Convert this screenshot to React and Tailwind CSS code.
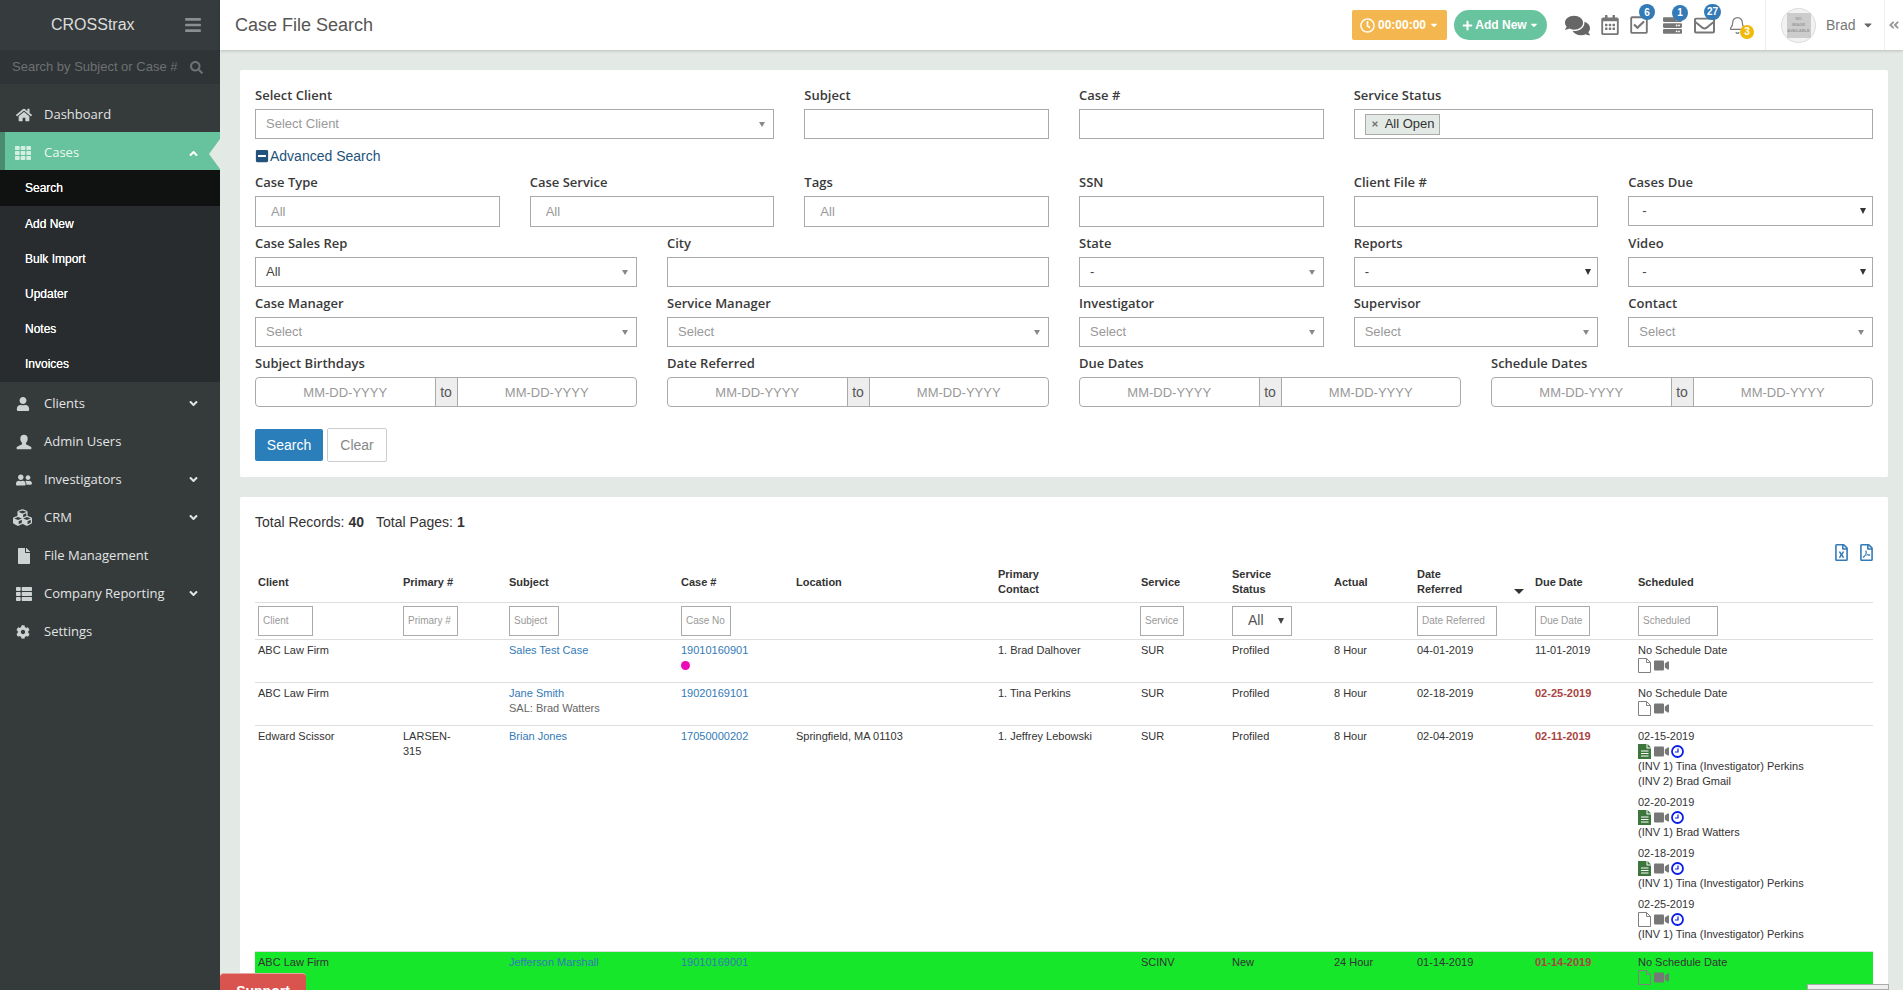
import {
  FaHome, FaTh, FaUser, FaUserFriends, FaCubes, FaFile, FaThList, FaCog, FaAngleDown, FaAngleUp,
  FaSearch, FaBars, FaRegClock, FaPlus, FaCaretDown, FaComments, FaRegCalendarAlt, FaRegCheckSquare,
  FaServer, FaRegEnvelope, FaAngleDoubleLeft, FaMinusSquare, FaVideo,
  FaRegFileExcel, FaRegFilePdf, FaTimes,
} from "react-icons/fa";
import { Bell } from "lucide-react";

function AdminIcon({ size, className }) {
  return (
    <svg width={size} height={size} viewBox="0 0 24 24" fill="currentColor" className={className}>
      <path d="M12 1a5.5 5.5 0 0 0-5.5 6c0 2.500 1 4.800 2.500 6v2.500L1 19.500V23h22v-3.500l-8-4V13c1.500-1.200 2.500-3.500 2.500-6A5.500 5.500 0 0 0 12 1z" />
    </svg>
  );
}

const menuTop = [{ label: "Dashboard", icon: FaHome, size: 16, pad: "pt-[3px]" }];
const menuBottom = [
  { label: "Clients", icon: FaUser, size: 14, more: true },
  { label: "Admin Users", icon: AdminIcon, size: 16 },
  { label: "Investigators", icon: FaUserFriends, size: 16, more: true },
  { label: "CRM", icon: FaCubes, size: 19, offset: "-ml-[3px]", more: true },
  { label: "File Management", icon: FaFile, size: 16 },
  { label: "Company Reporting", icon: FaThList, size: 16, more: true },
  { label: "Settings", icon: FaCog, size: 14 },
];
const subMenu = ["Add New", "Bulk Import", "Updater", "Notes", "Invoices"];

function MenuItem({ item }) {
  const Icon = item.icon;
  return (
    <div className={`flex h-[38px] items-center pl-[16px] pr-[20px] font-['Open_Sans',sans-serif] text-[13px] text-[#e2e4e4] ${item.pad || "pt-[5px]"}`}>
      <span className="flex w-[28px] shrink-0">
        <Icon size={item.size} className={`text-[#cfd2d2] ${item.offset || ""}`} />
      </span>
      <span>{item.label}</span>
      {item.more && <FaAngleDown size={13} className="ml-auto text-[#e2e4e4]" />}
    </div>
  );
}

function Sidebar() {
  return (
    <aside className="w-[220px] shrink-0 bg-[#353a3b]">
      <div className="flex h-[50px] items-center bg-[#363b3d] pl-[51px] pr-[18px] text-[16px] text-[#dddddd]">
        <span>CROSStrax</span>
        <FaBars size={18} className="ml-auto text-[#8c8f90]" />
      </div>
      <div className="flex h-[34px] items-center bg-[#2f3436] pl-[12px] pr-[17px] text-[13px] text-[#6d7172]">
        <span>Search by Subject or Case #</span>
        <FaSearch size={13} className="ml-auto" />
      </div>
      <nav className="mt-[10px]">
        {menuTop.map((item) => (
          <MenuItem key={item.label} item={item} />
        ))}
        <div className="relative flex h-[38px] items-center border-l-[5px] border-[#4a8a70] bg-[#67c39d] pl-[10px] pr-[20px] pt-[4px] font-['Open_Sans',sans-serif] text-[13px] text-[#eef8f3]">
          <span className="flex w-[29px] shrink-0">
            <FaTh size={16} className="text-[#d5eee3]" />
          </span>
          <span>Cases</span>
          <FaAngleUp size={13} className="ml-auto text-white" />
          <span className="absolute right-0 top-[7px] h-0 w-0 border-y-[15px] border-r-[11px] border-y-transparent border-r-[#e3e9e5]" />
        </div>
        <div className="bg-[#282c2e] pb-px text-[12px] text-white [text-shadow:0_0_0.6px_#ffffff]">
          <div className="flex h-[36px] items-center bg-[#101212] pl-[25px]">Search</div>
          {subMenu.map((label) => (
            <div key={label} className="flex h-[35px] items-center pl-[25px]">
              {label}
            </div>
          ))}
        </div>
        {menuBottom.map((item) => (
          <MenuItem key={item.label} item={item} />
        ))}
      </nav>
    </aside>
  );
}

function IconBadge({ value, className, children }) {
  return (
    <span className={`relative flex shrink-0 text-[#777777] ${className}`}>
      {children}
      <span className="absolute -top-[11px] -right-[6px] flex h-[16px] min-w-[16px] items-center justify-center rounded-full bg-[#337ab7] px-[3px] text-[10px] font-bold text-white">
        {value}
      </span>
    </span>
  );
}

function Header() {
  return (
    <header className="flex h-[50px] shrink-0 items-center bg-white pl-[15px] shadow-[0_1px_3px_rgba(0,0,0,0.18)]">
      <h1 className="text-[18px] text-[#555555]">Case File Search</h1>
      <div className="ml-auto flex h-full items-center">
        <button className="flex h-[30px] w-[95px] items-center justify-center gap-[3px] rounded-[2px] bg-[#f4b74f] text-[12px] font-bold text-white">
          <FaRegClock size={15} />
          00:00:00
          <FaCaretDown size={10} />
        </button>
        <button className="ml-[7px] flex h-[30px] w-[93px] items-center justify-center gap-[2px] rounded-full bg-[#68c49f] text-[12px] font-bold text-white">
          <FaPlus size={11} />
          Add New
          <FaCaretDown size={10} />
        </button>
        <FaComments size={25} className="ml-[18px] shrink-0 text-[#666666]" />
        <FaRegCalendarAlt size={20} className="ml-[10px] shrink-0 text-[#777777]" />
        <IconBadge value="6" className="ml-[9px]">
          <FaRegCheckSquare size={20} />
        </IconBadge>
        <IconBadge value="1" className="ml-[14px]">
          <FaServer size={19} />
        </IconBadge>
        <IconBadge value="27" className="ml-[12px]">
          <FaRegEnvelope size={21} />
        </IconBadge>
        <span className="relative ml-[13px] flex shrink-0 text-[#777777]">
          <Bell size={19} strokeWidth={1.5} />
          <span className="absolute -right-[7px] top-[9px] flex h-[14px] w-[14px] items-center justify-center rounded-full bg-[#f0b90b] text-[10px] font-bold text-white">
            3
          </span>
        </span>
        <div className="ml-[18px] flex h-full w-[120px] shrink-0 items-center border-x border-[#eeeeee] pl-[15px]">
          <span className="flex h-[35px] w-[35px] items-center justify-center rounded-full border border-[#dddddd] bg-[#f2f2f2]">
            <span className="flex h-[25px] w-[24px] flex-col items-center justify-center bg-[#cccccc] text-[4px] font-bold leading-[6px] text-[#999999]">
              <span>NO</span>
              <span>IMAGE</span>
              <span>AVAILABLE</span>
            </span>
          </span>
          <span className="ml-[10px] text-[14px] text-[#777777]">Brad</span>
          <FaCaretDown size={12} className="ml-[6px] text-[#666666]" />
        </div>
        <div className="flex w-[18px] justify-center">
          <FaAngleDoubleLeft size={12} className="text-[#999999]" />
        </div>
      </div>
    </header>
  );
}

function Label({ children }) {
  return (
    <label className="mb-[5px] block h-[18px] font-['Open_Sans',sans-serif] text-[13px] font-semibold leading-[18px] text-[#3a3a3a]">
      {children}
    </label>
  );
}

function TextField({ label, span, placeholder, tall }) {
  return (
    <div className={span}>
      <Label>{label}</Label>
      <input
        placeholder={placeholder}
        className={`w-full border border-[#aaaaaa] pl-[15px] text-[13px] outline-none placeholder:text-[#999999] ${tall ? "h-[31px]" : "h-[30px]"}`}
      />
    </div>
  );
}

function SelectField({ label, span, value, muted, dark, wide }) {
  return (
    <div className={span}>
      <Label>{label}</Label>
      <div className={`flex h-[30px] items-center justify-between border border-[#aaaaaa] text-[13px] ${wide ? "pl-[13px]" : "pl-[10px]"} ${dark ? "pr-[6px]" : "pr-[8px]"}`}>
        <span className={muted ? "text-[#999999]" : "text-[#444444]"}>{value}</span>
        {dark ? (
          <span className="h-0 w-0 border-x-[3px] border-t-[6px] border-x-transparent border-t-[#333333]" />
        ) : (
          <span className="h-0 w-0 border-x-[3px] border-t-[5px] border-x-transparent border-t-[#888888]" />
        )}
      </div>
    </div>
  );
}

function DateRange({ label }) {
  return (
    <div className="col-span-3">
      <Label>{label}</Label>
      <div className="flex h-[30px] overflow-hidden rounded-[4px] border border-[#aaaaaa] text-[13px]">
        <input
          placeholder="MM-DD-YYYY"
          className="w-0 grow pt-px text-center outline-none placeholder:text-[#999999]"
        />
        <span className="flex w-[23px] shrink-0 items-center justify-center border-x border-[#aaaaaa] bg-[#eeeeee] pt-px text-[14px] text-[#555555]">
          to
        </span>
        <input
          placeholder="MM-DD-YYYY"
          className="w-0 grow pt-px text-center outline-none placeholder:text-[#999999]"
        />
      </div>
    </div>
  );
}

function SearchCard() {
  return (
    <section className="rounded-[2px] bg-white px-[15px] pb-[15px] pt-[16px]">
      <div className="grid grid-cols-12 gap-x-[30px]">
        <SelectField label="Select Client" span="col-span-4" value="Select Client" muted />
        <TextField label="Subject" span="col-span-2" />
        <TextField label="Case #" span="col-span-2" />
        <div className="col-span-4">
          <Label>Service Status</Label>
          <div className="flex h-[30px] items-center border border-[#aaaaaa] pl-[10px]">
            <span className="flex h-[21px] w-[75px] items-center gap-[6px] border border-[#aaaaaa] bg-[#e3e9e5] pl-[5px] text-[13px] text-[#333333]">
              <FaTimes size={8} className="text-[#777777]" />
              All Open
            </span>
          </div>
        </div>
      </div>
      <div className="mt-[8px] flex h-[18px] items-center gap-[1px] text-[14px] text-[#23527c]">
        <FaMinusSquare size={14} />
        Advanced Search
      </div>
      <div className="mt-[8px] grid grid-cols-12 gap-x-[30px] gap-y-[7px]">
        <TextField label="Case Type" span="col-span-2" placeholder="All" tall />
        <TextField label="Case Service" span="col-span-2" placeholder="All" tall />
        <TextField label="Tags" span="col-span-2" placeholder="All" tall />
        <TextField label="SSN" span="col-span-2" tall />
        <TextField label="Client File #" span="col-span-2" tall />
        <SelectField label="Cases Due" span="col-span-2" value="-" dark wide />

        <SelectField label="Case Sales Rep" span="col-span-3" value="All" />
        <TextField label="City" span="col-span-3" />
        <SelectField label="State" span="col-span-2" value="-" />
        <SelectField label="Reports" span="col-span-2" value="-" dark />
        <SelectField label="Video" span="col-span-2" value="-" dark wide />

        <SelectField label="Case Manager" span="col-span-3" value="Select" muted />
        <SelectField label="Service Manager" span="col-span-3" value="Select" muted />
        <SelectField label="Investigator" span="col-span-2" value="Select" muted />
        <SelectField label="Supervisor" span="col-span-2" value="Select" muted />
        <SelectField label="Contact" span="col-span-2" value="Select" muted />

        <DateRange label="Subject Birthdays" />
        <DateRange label="Date Referred" />
        <DateRange label="Due Dates" />
        <DateRange label="Schedule Dates" />
      </div>
      <div className="mt-[21px] flex items-center gap-[4px] text-[14px]">
        <button className="h-[32px] w-[68px] rounded-[2px] bg-[#2a7fba] text-white">Search</button>
        <button className="h-[34px] w-[60px] rounded-[2px] border border-[#cccccc] bg-white text-[#888888]">
          Clear
        </button>
      </div>
    </section>
  );
}

function ReportIcons({ report, clock }) {
  return (
    <div className="flex h-[15px] items-center">
      <svg width="13" height="15" viewBox="0 0 13 15">
        {report ? (
          <>
            <path d="M0 0h8.500v4.500H13V15H0z" fill="#3c763d" />
            <path d="M9.500 0L13 3.500H9.500z" fill="#3c763d" />
            <path d="M3 7h7.500M3 9.500h7.500M3 12h7.500" stroke="#ffffff" strokeWidth="1" fill="none" />
          </>
        ) : (
          <path d="M.5.5h8l4 4v10H.5zM8.500.5v4h4" fill="none" stroke="#808080" strokeWidth="1" />
        )}
      </svg>
      <FaVideo size={15} className="ml-[3px] text-[#777777]" />
      {clock && (
        <svg width="13" height="13" viewBox="0 0 13 13" fill="none" stroke="#0a1ee8" className="ml-[2px]">
          <circle cx="6.500" cy="6.500" r="5.500" strokeWidth="1.800" />
          <path d="M7 3.500v3.500H4" strokeWidth="1.200" />
        </svg>
      )}
    </div>
  );
}

function ScheduleEntry({ date, report = true, lines }) {
  return (
    <div className="mb-[6px] last:mb-0">
      <div>{date}</div>
      <ReportIcons report={report} clock />
      {lines.map((line) => (
        <div key={line}>{line}</div>
      ))}
    </div>
  );
}

function HeadCell({ children, sorted }) {
  return (
    <th className="px-[3px] pb-[2px] text-left align-middle text-[11px] font-bold leading-[15px] text-[#333333]">
      {sorted ? (
        <div className="flex items-end justify-between">
          <span>{children}</span>
          <span className="mb-[3px] mr-[5px] h-0 w-0 border-x-[5px] border-t-[5px] border-x-transparent border-t-[#333333]" />
        </div>
      ) : (
        children
      )}
    </th>
  );
}

function FilterInput({ placeholder, width }) {
  return (
    <input
      placeholder={placeholder}
      className={`block h-[30px] border border-[#aaaaaa] pl-[4px] text-[10px] outline-none placeholder:text-[#999999] ${width}`}
    />
  );
}

const rowCell = "px-[3px] pb-[9px] pt-[3px] align-top";

function Row({ client, primary, subject, sales, caseNo, dot, location, contact, service, status, actual, referred, due, late, green, scheduled }) {
  return (
    <tr className={green ? "bg-[#16e72b]" : "border-b border-[#dddddd]"}>
      <td className={rowCell}>{client}</td>
      <td className={rowCell}>{primary}</td>
      <td className={rowCell}>
        <div className="text-[#337ab7]">{subject}</div>
        {sales && <div className="text-[#666666]">{sales}</div>}
      </td>
      <td className={rowCell}>
        <div className="text-[#337ab7]">{caseNo}</div>
        {dot && <div className="mt-[3px] h-[9px] w-[9px] rounded-full bg-[#ec09b8]" />}
      </td>
      <td className={rowCell}>{location}</td>
      <td className={rowCell}>{contact}</td>
      <td className={rowCell}>{service}</td>
      <td className={rowCell}>{status}</td>
      <td className={rowCell}>{actual}</td>
      <td className={rowCell}>{referred}</td>
      <td className={rowCell}>
        <span className={late ? "font-bold text-[#a94442]" : ""}>{due}</span>
      </td>
      <td className={rowCell}>{scheduled}</td>
    </tr>
  );
}

function NoSchedule() {
  return (
    <>
      <div>No Schedule Date</div>
      <ReportIcons />
    </>
  );
}

function ResultsCard() {
  return (
    <section className="mt-[20px] rounded-[2px] bg-white px-[15px] pt-[16px]">
      <div className="h-[18px] text-[14px] leading-[18px] text-[#333333]">
        Total Records: <b>40</b>
        <span className="ml-[12px]">
          Total Pages: <b>1</b>
        </span>
      </div>
      <div className="-mr-[2px] mt-[13px] flex h-[21px] items-start justify-end gap-[8px] text-[#337ab7]">
        <FaRegFileExcel size={17} />
        <FaRegFilePdf size={17} />
      </div>
      <table className="w-[1618px] table-fixed border-collapse text-[11px] leading-[15px] text-[#333333]">
        <colgroup>
          <col className="w-[145px]" />
          <col className="w-[106px]" />
          <col className="w-[172px]" />
          <col className="w-[115px]" />
          <col className="w-[202px]" />
          <col className="w-[143px]" />
          <col className="w-[91px]" />
          <col className="w-[102px]" />
          <col className="w-[83px]" />
          <col className="w-[118px]" />
          <col className="w-[103px]" />
          <col className="w-[238px]" />
        </colgroup>
        <thead>
          <tr className="h-[37px] border-b border-[#dddddd]">
            <HeadCell>Client</HeadCell>
            <HeadCell>Primary #</HeadCell>
            <HeadCell>Subject</HeadCell>
            <HeadCell>Case #</HeadCell>
            <HeadCell>Location</HeadCell>
            <HeadCell>
              Primary
              <br />
              Contact
            </HeadCell>
            <HeadCell>Service</HeadCell>
            <HeadCell>
              Service
              <br />
              Status
            </HeadCell>
            <HeadCell>Actual</HeadCell>
            <HeadCell sorted>
              Date
              <br />
              Referred
            </HeadCell>
            <HeadCell>Due Date</HeadCell>
            <HeadCell>Scheduled</HeadCell>
          </tr>
        </thead>
        <tbody>
          <tr className="h-[37px] border-b border-[#dddddd]">
            <td className="px-[3px]"><FilterInput placeholder="Client" width="w-[55px]" /></td>
            <td className="px-[3px]"><FilterInput placeholder="Primary #" width="w-[55px]" /></td>
            <td className="px-[3px]"><FilterInput placeholder="Subject" width="w-[50px]" /></td>
            <td className="px-[3px]"><FilterInput placeholder="Case No" width="w-[50px]" /></td>
            <td />
            <td />
            <td className="px-[3px]"><FilterInput placeholder="Service" width="-ml-px w-[44px]" /></td>
            <td className="px-[3px]">
              <div className="flex h-[30px] w-[60px] items-center justify-between border border-[#aaaaaa] pl-[15px] pr-[7px] text-[14px] text-[#555555]">
                All
                <span className="h-0 w-0 border-x-[3px] border-t-[6px] border-x-transparent border-t-[#444444]" />
              </div>
            </td>
            <td />
            <td className="px-[3px]"><FilterInput placeholder="Date Referred" width="w-[80px]" /></td>
            <td className="px-[3px]"><FilterInput placeholder="Due Date" width="w-[55px]" /></td>
            <td className="px-[3px]"><FilterInput placeholder="Scheduled" width="w-[80px]" /></td>
          </tr>
          <Row
            client="ABC Law Firm"
            subject="Sales Test Case"
            caseNo="19010160901"
            dot
            contact="1. Brad Dalhover"
            service="SUR"
            status="Profiled"
            actual="8 Hour"
            referred="04-01-2019"
            due="11-01-2019"
            scheduled={<NoSchedule />}
          />
          <Row
            client="ABC Law Firm"
            subject="Jane Smith"
            sales="SAL: Brad Watters"
            caseNo="19020169101"
            contact="1. Tina Perkins"
            service="SUR"
            status="Profiled"
            actual="8 Hour"
            referred="02-18-2019"
            due="02-25-2019"
            late
            scheduled={<NoSchedule />}
          />
          <Row
            client="Edward Scissor"
            primary={
              <>
                LARSEN-
                <br />
                315
              </>
            }
            subject="Brian Jones"
            caseNo="17050000202"
            location="Springfield, MA 01103"
            contact="1. Jeffrey Lebowski"
            service="SUR"
            status="Profiled"
            actual="8 Hour"
            referred="02-04-2019"
            due="02-11-2019"
            late
            scheduled={
              <>
                <ScheduleEntry date="02-15-2019" lines={["(INV 1) Tina (Investigator) Perkins", "(INV 2) Brad Gmail"]} />
                <ScheduleEntry date="02-20-2019" lines={["(INV 1) Brad Watters"]} />
                <ScheduleEntry date="02-18-2019" lines={["(INV 1) Tina (Investigator) Perkins"]} />
                <ScheduleEntry date="02-25-2019" report={false} lines={["(INV 1) Tina (Investigator) Perkins"]} />
              </>
            }
          />
          <Row
            green
            client="ABC Law Firm"
            subject="Jefferson Marshall"
            caseNo="19010169001"
            service="SCINV"
            status="New"
            actual="24 Hour"
            referred="01-14-2019"
            due="01-14-2019"
            late
            scheduled={<NoSchedule />}
          />
        </tbody>
      </table>
    </section>
  );
}

export default function App() {
  return (
    <div className="relative flex h-[990px] overflow-hidden bg-[#e3e9e5] font-['Liberation_Sans',Arial,sans-serif]">
      <Sidebar />
      <div className="flex w-0 grow flex-col">
        <Header />
        <main className="pl-[20px] pr-[15px] pt-[20px]">
          <SearchCard />
          <ResultsCard />
        </main>
      </div>
      <div className="absolute left-[220px] top-[973px] h-[17px] w-[86px] overflow-hidden rounded-t-[4px] border-t border-[#e8a5a3] bg-[#d9534f] pt-[9px] text-center text-[14px] font-bold leading-[16px] text-white">
        Support
      </div>
      <div className="absolute left-[1807px] top-[984px] h-[6px] w-[82px] border border-[#aaaaaa] bg-[#eeeeee]" />
    </div>
  );
}
